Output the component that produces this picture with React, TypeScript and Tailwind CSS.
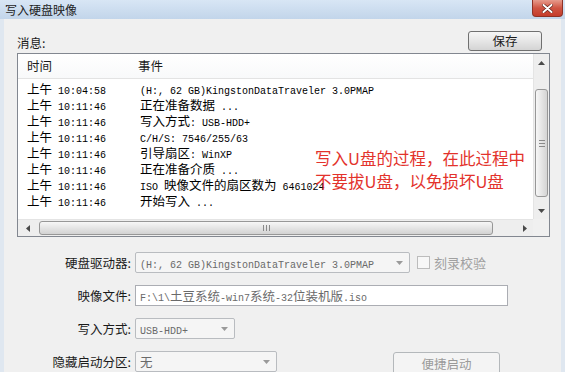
import React from 'react';

const CJK = /[\u2E80-\u9FFF\uFF00-\uFFEF\u3000-\u303F]/;

// splits mixed text: CJK runs in Noto Sans CJK, latin runs in a narrow mono
function Mixed({ text }: { text: string }) {
  const parts = text.split(/([\u2E80-\u9FFF\uFF00-\uFFEF\u3000-\u303F]+)/).filter(Boolean);
  return (
    <>
      {parts.map((p, i) =>
        CJK.test(p) ? (
          <span key={i} className="inline-block leading-[15px] text-[12.5px] font-['Noto_Sans_CJK_SC',sans-serif]">{p}</span>
        ) : (
          <span key={i} className="inline-block leading-[15px] text-[10px] font-['Liberation_Mono',monospace]">{p}</span>
        )
      )}
    </>
  );
}

const log: [string, string][] = [
  ['上午 10:04:58', '(H:, 62 GB)KingstonDataTraveler 3.0PMAP'],
  ['上午 10:11:46', '正在准备数据 ...'],
  ['上午 10:11:46', '写入方式: USB-HDD+'],
  ['上午 10:11:46', 'C/H/S: 7546/255/63'],
  ['上午 10:11:46', '引导扇区: WinXP'],
  ['上午 10:11:46', '正在准备介质 ...'],
  ['上午 10:11:46', 'ISO 映像文件的扇区数为 6461024'],
  ['上午 10:11:46', '开始写入 ...'],
];

function Tri({ dir, color = '#4a4a4a' }: { dir: 'up' | 'down' | 'left' | 'right'; color?: string }) {
  const pts = {
    up: '0,4 7,4 3.5,0',
    down: '0,0 7,0 3.5,4',
    left: '4,0 4,7 0,3.5',
    right: '0,0 0,7 4,3.5',
  }[dir];
  const vertical = dir === 'up' || dir === 'down';
  return (
    <svg width={vertical ? 7 : 4} height={vertical ? 4 : 7} viewBox={vertical ? '0 0 7 4' : '0 0 4 7'}>
      <polygon points={pts} fill={color} />
    </svg>
  );
}

function Combo({ w, text }: { w: string; text: string }) {
  return (
    <div className={`${w} h-[21px] flex items-center border border-[#b9bcc0] rounded-[2px] bg-[#f5f5f5] pl-[4px] pr-[6px] text-[#6a6a6a] whitespace-pre`}>
      <div className="flex-1 overflow-hidden leading-[19px]">
        <Mixed text={text} />
      </div>
      <Tri dir="down" color="#9a9a9a" />
    </div>
  );
}

function Button({ label, disabled, className }: { label: string; disabled?: boolean; className?: string }) {
  return (
    <div
      className={`${className ?? ''} flex items-center justify-center rounded-[3px] border text-[12.5px] leading-[16px] ${
        disabled
          ? 'border-[#b4b8bb] bg-[#f4f4f4] text-[#9a9a9a]'
          : 'border-[#707070] bg-gradient-to-b from-[#f6f6f6] via-[#e6e6e6] to-[#d4d4d4] text-[#1b1b1b]'
      }`}
    >
      {label}
    </div>
  );
}

export default function App() {
  return (
    <div className="relative w-[565px] h-[372px] overflow-hidden flex flex-col bg-[#f0f0f0] font-['Noto_Sans_CJK_SC',sans-serif] text-[#1b1b1b]">
      {/* Title bar */}
      <div className="h-[20px] flex justify-between bg-gradient-to-b from-[#d8e6f5] to-[#c2d5ea]">
        <div className="pl-[5px] leading-[19px] text-[12px] text-[#1e1e1e]">写入硬盘映像</div>
        <div className="mr-[2px] w-[31px] h-[17px] flex items-center justify-center rounded-b-[4px] border border-t-0 border-[#8e3226] bg-gradient-to-b from-[#e69a8c] via-[#cf5443] to-[#c53c2b]">
          <svg width="11" height="9" viewBox="0 0 11 9">
            <path d="M1.5 1 L9.5 8 M9.5 1 L1.5 8" stroke="#5a1a12" strokeWidth="3.2" strokeLinecap="round" />
            <path d="M1.5 1 L9.5 8 M9.5 1 L1.5 8" stroke="#ffffff" strokeWidth="2" strokeLinecap="round" />
          </svg>
        </div>
      </div>

      {/* Body */}
      <div className="flex-1 border-l-[4px] border-r-[4px] border-[#dfe7f0] pl-[13px] pr-[11px] pt-[12px]">
        <div className="h-[20px] flex items-end justify-between">
          <div className="text-[12.5px] leading-[16px]">消息:</div>
          <Button label="保存" className="w-[74px] h-[20px] mr-[8px]" />
        </div>

        {/* Log list */}
        <div className="mt-[2px] h-[184px] border border-[#828790] bg-white flex flex-col">
          <div className="flex-1 flex min-h-0">
            <div className="flex-1 flex flex-col">
              <div className="h-[25px] flex items-center border-b border-[#e3e3e3] bg-gradient-to-b from-white to-[#f8f9fa] text-[12.5px] leading-[16px]">
                <div className="w-[120px] pl-[9px]">时间</div>
                <div>事件</div>
              </div>
              <div className="pt-[2px]">
                {log.map(([t, e], i) => (
                  <div key={i} className="h-[16px] leading-[15px] flex items-center whitespace-pre text-black">
                    <div className="w-[122px] pl-[9px]">
                      <Mixed text={t} />
                    </div>
                    <div>
                      <Mixed text={e} />
                    </div>
                  </div>
                ))}
              </div>
            </div>
            {/* vertical scrollbar */}
            <div className="w-[16px] flex flex-col bg-[#eeeeee] border-l border-[#e4e4e4]">
              <div className="h-[17px] flex items-center justify-center">
                <Tri dir="up" />
              </div>
              <div className="flex-1 pt-[18px] px-[1px]">
                <div className="h-[108px] rounded-[3px] border border-[#979797] bg-gradient-to-r from-[#f7f7f7] to-[#d4d4d4] flex flex-col items-center justify-center gap-[2px]">
                  <div className="w-[6px] h-px bg-[#8a8a8a]" />
                  <div className="w-[6px] h-px bg-[#8a8a8a]" />
                  <div className="w-[6px] h-px bg-[#8a8a8a]" />
                </div>
              </div>
              <div className="h-[17px] flex items-center justify-center">
                <Tri dir="down" />
              </div>
            </div>
          </div>
          {/* horizontal scrollbar */}
          <div className="h-[17px] flex">
            <div className="flex-1 flex bg-[#eeeeee] border-t border-[#e4e4e4]">
              <div className="w-[20px] flex items-center justify-center">
                <Tri dir="left" />
              </div>
              <div className="flex-1 py-[1px] pl-[1px]">
                <div className="w-[454px] h-full rounded-[3px] border border-[#979797] bg-gradient-to-b from-[#f7f7f7] to-[#d2d2d2] flex items-center justify-center gap-[2px]">
                  <div className="w-px h-[6px] bg-[#8a8a8a]" />
                  <div className="w-px h-[6px] bg-[#8a8a8a]" />
                  <div className="w-px h-[6px] bg-[#8a8a8a]" />
                </div>
              </div>
              <div className="w-[17px] flex items-center justify-center">
                <Tri dir="right" />
              </div>
            </div>
            <div className="w-[16px] bg-[#f0f0f0]" />
          </div>
        </div>

        {/* Form */}
        <div className="mt-[15px] flex flex-col gap-[12px] text-[12.5px] leading-[16px]">
          <div className="h-[21px] flex items-center">
            <div className="w-[116px] pr-[2px] text-right">硬盘驱动器:</div>
            <div className="ml-[2px]">
              <Combo w="w-[275px]" text="(H:, 62 GB)KingstonDataTraveler 3.0PMAP" />
            </div>
            <div className="ml-[7px] w-[13px] h-[13px] border border-[#bcbcbc] bg-[#f7f7f7]" />
            <div className="ml-[4px] text-[13px] text-[#a0a0a0]">刻录校验</div>
          </div>
          <div className="h-[21px] flex items-center">
            <div className="w-[116px] pr-[2px] text-right">映像文件:</div>
            <div className="ml-[2px] w-[373px] h-[21px] border border-[#abadb3] bg-white pl-[4px] leading-[19px] whitespace-pre text-[#6a6a6a]">
              <Mixed text="F:\1\土豆系统-win7系统-32位装机版.iso" />
            </div>
          </div>
          <div className="h-[21px] flex items-center">
            <div className="w-[116px] pr-[2px] text-right">写入方式:</div>
            <div className="ml-[2px]">
              <Combo w="w-[100px]" text="USB-HDD+" />
            </div>
          </div>
          <div className="h-[21px] flex items-start">
            <div className="w-[116px] pr-[2px] text-right leading-[21px]">隐藏启动分区:</div>
            <div className="ml-[2px]">
              <Combo w="w-[142px]" text="无" />
            </div>
            <Button label="便捷启动" disabled className="ml-[116px] mt-[1px] w-[107px] h-[23px] shrink-0" />
          </div>
        </div>
      </div>

      {/* Red annotation over the list */}
      <div className="absolute left-[315px] top-[147px] text-[16.5px] leading-[23px] text-[#e3322b]">
        <div>写入U盘的过程，在此过程中</div>
        <div>不要拔U盘，以免损坏U盘</div>
      </div>
    </div>
  );
}
